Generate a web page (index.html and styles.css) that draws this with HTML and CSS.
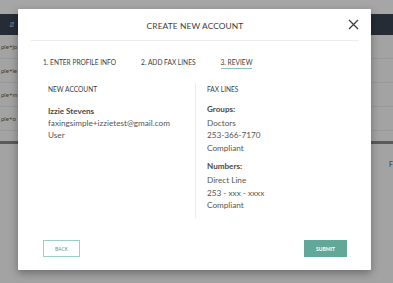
FILE: index.html
```html
<!DOCTYPE html>
<html>
<head>
<meta charset="utf-8">
<link rel="stylesheet" href="styles.css">
</head>
<body>
<div class="page">
  <div class="topband"></div>
  <div class="navbar"><span class="sort">&#8693;</span></div>
  <div class="rows">
    <div class="row">ple+jo</div>
    <div class="row">ple+le</div>
    <div class="row">ple+m</div>
    <div class="row">ple+o</div>
  </div>
  <div class="darkbar"></div>
  <div class="rightlabel">F</div>
</div>
<div class="overlay">
  <div class="modal">
    <div class="modal-header">
      <div class="title">CREATE NEW ACCOUNT</div>
      <svg class="close" width="11" height="11" viewBox="0 0 11 11"><path d="M1 1L10 10M10 1L1 10" stroke="#3d3d3d" stroke-width="1.3" fill="none"/></svg>
    </div>
    <div class="steps">
      <span class="step">1. ENTER PROFILE INFO</span>
      <span class="step">2. ADD FAX LINES</span>
      <span class="step active">3. REVIEW</span>
    </div>
    <div class="review">
      <div class="col left">
        <div class="col-title">NEW ACCOUNT</div>
        <div class="name">Izzie Stevens</div>
        <div class="line">faxingsimple+izzietest@gmail.com</div>
        <div class="line">User</div>
      </div>
      <div class="col right">
        <div class="col-title">FAX LINES</div>
        <div class="label">Groups:</div>
        <div class="line">Doctors</div>
        <div class="line">253-366-7170</div>
        <div class="line">Compliant</div>
        <div class="label second">Numbers:</div>
        <div class="line">Direct Line</div>
        <div class="line">253 - xxx - xxxx</div>
        <div class="line">Compliant</div>
      </div>
    </div>
    <div class="actions">
      <button class="btn back">BACK</button>
      <button class="btn submit">SUBMIT</button>
    </div>
  </div>
</div>
</body>
</html>
```
FILE: styles.css
```css
html, body {
  margin: 0;
  padding: 0;
}
body {
  width: 393px;
  height: 283px;
  overflow: hidden;
  position: relative;
  font-family: Lato, "Open Sans", sans-serif;
  background: #a3a3a3;
}
.page {
  width: 393px;
  height: 283px;
  background: #a3a3a3;
}
.topband {
  height: 14px;
  background: #a6a6a6;
}
.navbar {
  height: 21px;
  background: #262c36;
  display: flex;
  align-items: center;
  padding-left: 9px;
}
.sort {
  color: #8a9099;
  font-size: 7px;
}
.row {
  height: 23px;
  border-bottom: 1px solid #989898;
  font-size: 6px;
  color: #3a3a3a;
  display: flex;
  align-items: center;
  padding-left: 1px;
  white-space: nowrap;
}
.darkbar {
  margin-top: 10px;
  height: 3px;
  background: #5a5a5a;
}
.rightlabel {
  position: absolute;
  left: 389px;
  top: 160px;
  font-size: 7px;
  color: #333;
}
.overlay {
  position: absolute;
  inset: 0;
}
.modal {
  position: absolute;
  left: 18px;
  top: 9px;
  width: 353px;
  height: 261px;
  background: #fff;
  box-shadow: 0 3px 8px rgba(0,0,0,0.35);
  border-radius: 1px;
  display: flex;
  flex-direction: column;
  color: #444;
}
.modal-header {
  position: relative;
  margin: 0 12px 0 13px;
  height: 31px;
  border-bottom: 1px solid #eceeee;
  display: flex;
  align-items: center;
  justify-content: center;
}
.title {
  font-size: 8.4px;
  color: #3d3d3d;
  letter-spacing: 0.1px;
  padding-top: 2px;
}
.close {
  position: absolute;
  right: 0;
  top: 10px;
}
.steps {
  display: flex;
  padding: 17px 0 0 25px;
  font-size: 6.6px;
  color: #3d3d3d;
  height: 14px;
}
.step {
  margin-right: 25px;
  height: 9px;
}
.step.active {
  border-bottom: 1px solid #8cc5bb;
  padding-bottom: 1px;
}
.review {
  display: flex;
  margin-top: 11px;
  height: 135px;
}
.col-title {
  font-size: 6.6px;
  color: #3d3d3d;
  margin-bottom: 13px;
  padding-top: 2px;
}
.col.left {
  width: 147px;
  padding-left: 30px;
  border-right: 1px solid #ececec;
}
.col.right {
  padding-left: 11px;
}
.name, .label {
  font-size: 8.1px;
  font-weight: bold;
  color: #4a4a4a;
  line-height: 11px;
  margin-bottom: 1px;
}
.col.right .col-title {
  margin-bottom: 11px;
}
.col.right .label {
  margin-bottom: 2px;
}
.label.second {
  margin-top: 7px;
}
.line {
  font-size: 8.2px;
  color: #555;
  line-height: 11.5px;
}
.col.right .line {
  line-height: 12.4px;
}
.actions {
  display: flex;
  justify-content: space-between;
  padding: 0 24px 0 25px;
  margin-top: 22px;
}
.btn {
  font-family: Lato, sans-serif;
  font-size: 5px;
  height: 17px;
  padding: 0;
  border-radius: 0;
  cursor: pointer;
}
.btn.back {
  width: 37px;
  background: #fff;
  border: 1px solid #9dcfc5;
  color: #5a9e91;
}
.btn.submit {
  width: 43px;
  background: #62a899;
  border: 1px solid #62a899;
  color: #fff;
  font-weight: bold;
}
```
